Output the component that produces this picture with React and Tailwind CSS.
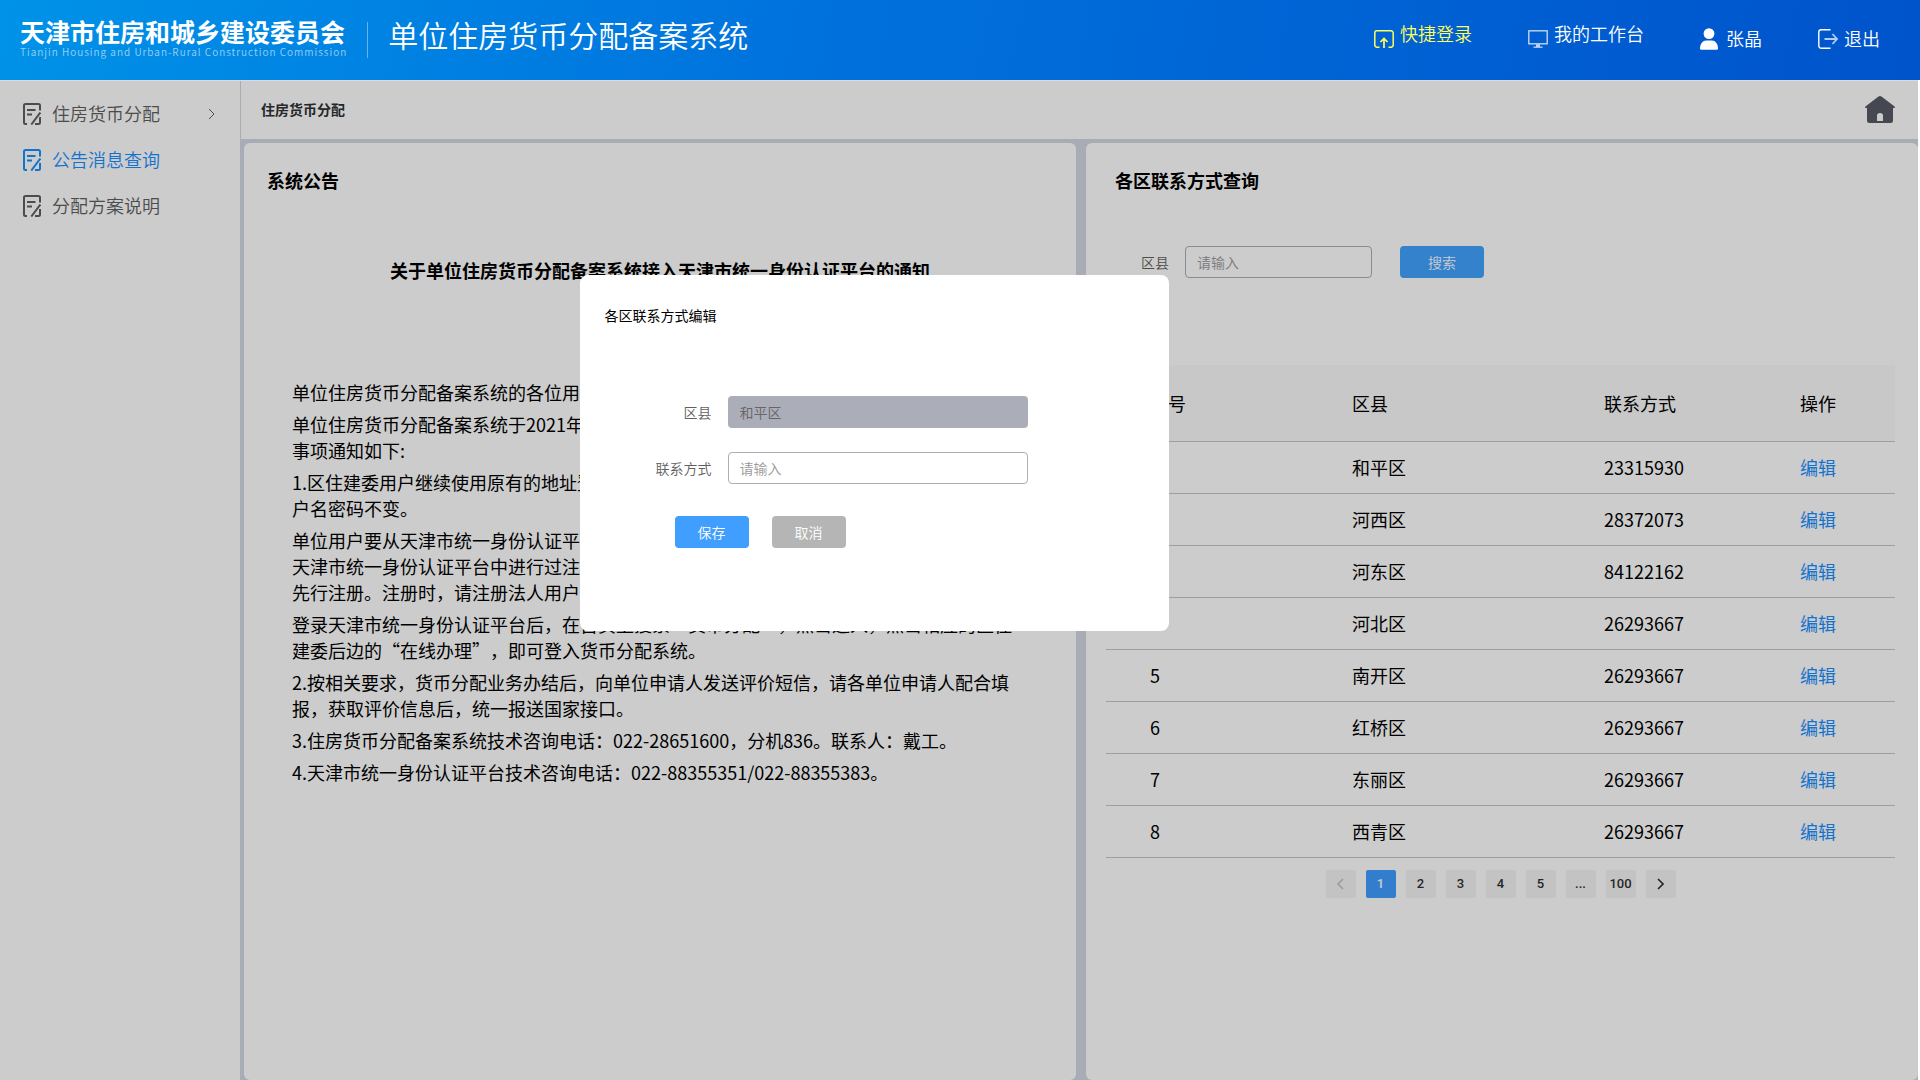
import React, { useState } from "react";

const menus = [
    { name: "住房货币分配", hasChildren: true },
    { name: "公告消息查询" },
    { name: "分配方案说明" },
];

const notices = [
    "单位住房货币分配备案系统的各位用户：",
    "单位住房货币分配备案系统于2021年4月1日起正式接入天津市统一身份认证平台，将有关事项通知如下:",
    "1.区住建委用户继续使用原有的地址登录单位住房货币分配备案系统，原来登录系统中的用户名密码不变。",
    "单位用户要从天津市统一身份认证平台登录单位住房货币分配备案系统，如单位用户没有在天津市统一身份认证平台中进行过注册，请相关经办人员在天津市统一身份认证平台的网站先行注册。注册时，请注册法人用户。",
    "登录天津市统一身份认证平台后，在首页上搜索“货币分配”，点击进入，点击相应的区住建委后边的“在线办理”，即可登入货币分配系统。",
    "2.按相关要求，货币分配业务办结后，向单位申请人发送评价短信，请各单位申请人配合填报，获取评价信息后，统一报送国家接口。",
    "3.住房货币分配备案系统技术咨询电话：022-28651600，分机836。联系人：戴工。",
    "4.天津市统一身份认证平台技术咨询电话：022-88355351/022-88355383。",
];

const districts = [
    { name: "和平区", phone: "23315930" },
    { name: "河西区", phone: "28372073" },
    { name: "河东区", phone: "84122162" },
    { name: "河北区", phone: "26293667" },
    { name: "南开区", phone: "26293667" },
    { name: "红桥区", phone: "26293667" },
    { name: "东丽区", phone: "26293667" },
    { name: "西青区", phone: "26293667" },
];

const pages = ["1", "2", "3", "4", "5", "...", "100"];

const DocIcon = () => (
    <svg width="18" height="22" viewBox="0 0 18 22" fill="none" stroke="currentColor" strokeWidth="2">
        <path d="M4 21H2.5A1.5 1.5 0 0 1 1 19.5V2.5A1.5 1.5 0 0 1 2.500 1H15.500A1.500 1.500 0 0 1 17 2.500V7.500" />
        <path d="M4 7H12.500M4 11.500H9" strokeWidth="2" />
        <path d="M17.300 9.500L8.300 21.500" strokeWidth="2" />
        <path d="M17 14V19.500A1.500 1.500 0 0 1 15.500 21H12" />
    </svg>
);

const LoginIcon = () => (
    <svg width="20" height="18" viewBox="0 0 20 18" fill="none" stroke="currentColor" strokeWidth="1.5">
        <path d="M5.500 17.200H3A2.200 2.200 0 0 1 .8 15V3A2.200 2.200 0 0 1 3 .8H17A2.200 2.200 0 0 1 19.200 3V15A2.200 2.200 0 0 1 17 17.200H14.500" />
        <path d="M10 18V9M6.500 12L10 8.500L13.500 12" strokeWidth="1.700" />
    </svg>
);

const DeskIcon = () => (
    <svg width="20" height="18" viewBox="0 0 20 18" fill="none" stroke="currentColor" strokeOpacity="0.75">
        <rect x=".8" y=".8" width="18.4" height="13" strokeWidth="1.400" />
        <path d="M8 15.600H12" strokeWidth="2.400" />
        <path d="M5.500 17.200H14.500" strokeWidth="1.300" />
    </svg>
);

const UserIcon = () => (
    <svg width="18" height="22" viewBox="0 0 18 22" fill="currentColor">
        <circle cx="9" cy="5.6" r="5.4" />
        <path d="M0 20.500C0 15.500 3 12.500 6 12.500H12C15 12.500 18 15.500 18 20.500Q18 21.700 16.800 21.700H1.200Q0 21.700 0 20.500Z" />
    </svg>
);

const LogoutIcon = () => (
    <svg width="20" height="20" viewBox="0 0 20 20" fill="none" stroke="currentColor" strokeWidth="1.4">
        <path d="M12.500 .8H3.200A2.400 2.400 0 0 0 .8 3.200V16.800A2.400 2.400 0 0 0 3.200 19.200H12.500" />
        <path d="M6.500 10H18.500M14.500 5L19 10L14.500 15" strokeWidth="1.800" strokeOpacity="0.7" />
    </svg>
);

const HomeIcon = () => (
    <svg width="30" height="27" viewBox="0 0 30 27" fill="currentColor" fillRule="evenodd">
        <path d="M13.200 .8Q15 -.6 16.800 .8L29.600 10.400Q30.400 11.400 29.400 12H28V24.500Q28 27 25.500 27H4.500Q2 27 2 24.500V12H.6Q-.4 11.400 .4 10.400ZM12 25H18V19.500Q18 17 15 17Q12 17 12 19.500Z" />
    </svg>
);

const Chevron = ({ left, thin }) => (
    <svg width="7" height="12" viewBox="0 0 7 12" fill="none" stroke="currentColor" strokeWidth={thin ? 1 : 1.6}>
        <path d={left ? "M6 1L1 6L6 11" : "M1 1L6 6L1 11"} />
    </svg>
);

const Header = () => (
    <header className="h-20 shrink-0 flex items-center justify-between pl-5 pr-10 text-white bg-[linear-gradient(100deg,#0092e8_0%,#0072dd_42%,#0053cb_100%)]">
        <div className="flex items-center">
            <div className="pb-1">
                <p className="text-[25px] leading-7 font-bold">天津市住房和城乡建设委员会</p>
                <p className="text-[10px] leading-[14px] font-[350] tracking-widest text-white/60">Tianjin Housing and Urban-Rural Construction Commission</p>
            </div>
            <div className="w-px h-9 mx-5 bg-white/40"></div>
            <h1 className="text-[30px] leading-10 font-[350] pb-3">单位住房货币分配备案系统</h1>
        </div>
        <nav className="flex items-center gap-14 pb-0.5 text-lg font-[350]">
            <a href="#" className="flex items-center gap-1.5 text-[#ffff5c]">
                <LoginIcon />
                <span className="pb-3">快捷登录</span>
            </a>
            <a href="#" className="flex items-center gap-1.5">
                <DeskIcon />
                <span className="pb-3">我的工作台</span>
            </a>
            <a href="#" className="flex items-center gap-2">
                <UserIcon />
                <span className="pb-0.5">张晶</span>
            </a>
            <button className="flex items-center gap-1.5">
                <LogoutIcon />
                <span className="pb-0.5">退出</span>
            </button>
        </nav>
    </header>
);

const Sidebar = () => (
    <aside className="w-[241px] shrink-0 bg-white border-r border-[#d2d7e2] pt-2.5">
        {menus.map((menu, index) => (
            <a
                key={index}
                href="#"
                className={`flex items-center h-[46px] pl-[23px] pr-[25px] text-lg font-[350] ${index === 1 ? "text-[#1890ff]" : "text-[#606060]"}`}
            >
                <DocIcon />
                <span className="ml-[11px] pb-0.5">{menu.name}</span>
                {menu.hasChildren && (
                    <span className="ml-auto">
                        <Chevron thin />
                    </span>
                )}
            </a>
        ))}
    </aside>
);

const NoticePanel = () => (
    <section className="bg-white rounded-md px-[23px]">
        <h2 className="mt-[23px] text-lg leading-7 font-bold">系统公告</h2>
        <h3 className="mt-16 text-lg leading-6 font-bold text-center">关于单位住房货币分配备案系统接入天津市统一身份认证平台的通知</h3>
        <div className="mt-[97px] pl-[25px] pr-9 text-lg leading-[26px] [text-spacing-trim:space-all]">
            {notices.map((text, index) => (
                <p key={index} className="mb-1.5">
                    {text}
                </p>
            ))}
        </div>
    </section>
);

const ContactPanel = ({ onEdit }) => (
    <section className="bg-white rounded-md pl-5 pr-[23px]">
        <h2 className="mt-[23px] pl-[9px] text-lg leading-7 font-bold">各区联系方式查询</h2>
        <form className="mt-[52px] pl-[35px] flex items-center text-sm font-[350]">
            <label htmlFor="district" className="text-[#606060]">
                区县
            </label>
            <input
                id="district"
                type="text"
                placeholder="请输入"
                className="ml-4 w-[187px] h-8 px-[11px] rounded border border-[#abadb9] placeholder:text-[#999999]"
            />
            <button type="button" className="ml-7 w-[84px] h-8 rounded bg-[#42a3ff] text-white">
                搜索
            </button>
        </form>
        <table className="mt-[87px] w-full table-fixed text-left text-lg leading-6">
            <thead className="bg-[#fafafa]">
                <tr className="h-19 border-b border-[#c6c6c6]">
                    <th className="w-[202px] pl-11 font-normal">序号</th>
                    <th className="w-[252px] pl-11 font-normal">区县</th>
                    <th className="w-[196px] pl-11 font-normal">联系方式</th>
                    <th className="pl-11 font-normal">操作</th>
                </tr>
            </thead>
            <tbody>
                {districts.map((item, index) => (
                    <tr key={index} className="h-13 border-b border-[#c6c6c6]">
                        <td className="pl-11">{index + 1}</td>
                        <td className="pl-11">{item.name}</td>
                        <td className="pl-11">{item.phone}</td>
                        <td className="pl-11">
                            <button onClick={onEdit} className="text-[#1890ff]">
                                编辑
                            </button>
                        </td>
                    </tr>
                ))}
            </tbody>
        </table>
        <div className="mt-3 flex justify-center gap-2.5 font-[Roboto,sans-serif] text-[13px] font-medium text-[#303133]">
            <button aria-label="上一页" className="w-[30px] h-7 flex items-center justify-center rounded-xs bg-[#f4f4f5] text-[#c0c4cc]">
                <Chevron left />
            </button>
            {pages.map((page) => (
                <button key={page} className={`w-[30px] h-7 rounded-xs ${page === "1" ? "bg-[#409eff] text-white" : "bg-[#f4f4f5]"}`}>
                    {page}
                </button>
            ))}
            <button aria-label="下一页" className="w-[30px] h-7 flex items-center justify-center rounded-xs bg-[#f4f4f5]">
                <Chevron />
            </button>
        </div>
    </section>
);

const EditModal = ({ onClose }) => (
    <div className="absolute inset-0 bg-black/20 flex items-start justify-center pt-[194px] pr-[170px]">
        <div role="dialog" aria-labelledby="edit-title" className="w-[589px] pt-7 pb-[83px] bg-white rounded-lg text-sm">
            <h2 id="edit-title" className="pl-[25px] leading-6">
                各区联系方式编辑
            </h2>
            <form className="mt-[69px] font-[350]">
                <div className="flex items-center">
                    <label htmlFor="edit-district" className="w-33 text-right text-[#606060]">
                        区县
                    </label>
                    <input
                        id="edit-district"
                        type="text"
                        disabled
                        defaultValue="和平区"
                        className="ml-4 w-[300px] h-8 px-3 rounded bg-[#abadb9] text-[#666666]"
                    />
                </div>
                <div className="mt-6 flex items-center">
                    <label htmlFor="edit-phone" className="w-33 text-right text-[#606060]">
                        联系方式
                    </label>
                    <input
                        id="edit-phone"
                        type="text"
                        placeholder="请输入"
                        className="ml-4 w-[300px] h-8 px-[11px] rounded border border-[#abadb9] placeholder:text-[#999999]"
                    />
                </div>
                <div className="mt-8 pl-[95px] flex gap-[23px] text-white">
                    <button type="button" className="w-[74px] h-8 rounded bg-[#409eff]">
                        保存
                    </button>
                    <button type="button" onClick={onClose} className="w-[74px] h-8 rounded bg-[#b5b5b5]">
                        取消
                    </button>
                </div>
            </form>
        </div>
    </div>
);

const App = () => {
    const [editing, setEditing] = useState(true);
    return (
        <div lang="zh-CN" className="min-h-screen flex flex-col bg-white text-black font-['Noto_Sans_CJK_SC',sans-serif]">
            <Header />
            <div className="relative grow flex border-t border-[#d6dbe6] mr-0.5">
                <Sidebar />
                <main className="grow flex flex-col bg-[#d3d8e2]">
                    <div className="h-[58px] flex items-center justify-between pl-5 pr-[23px] pb-0.5 bg-white">
                        <span className="text-sm font-bold text-[#303133]">住房货币分配</span>
                        <a href="#" aria-label="首页" className="text-[#575a66]">
                            <HomeIcon />
                        </a>
                    </div>
                    <div className="grow grid grid-cols-2 gap-2.5 pt-1 pl-[3px]">
                        <NoticePanel />
                        <ContactPanel onEdit={() => setEditing(true)} />
                    </div>
                </main>
                {editing && <EditModal onClose={() => setEditing(false)} />}
            </div>
        </div>
    );
};

export default App;
